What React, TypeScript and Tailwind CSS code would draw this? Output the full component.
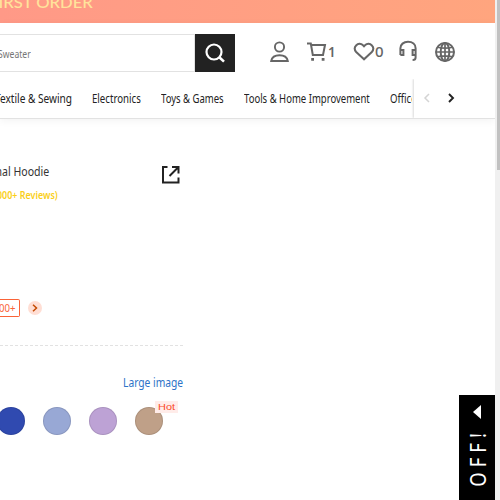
import { useLayoutEffect, useRef, useState } from 'react';

type FitProps = { text: string; width: number; className?: string };

// Condenses a single line of text to the given width.
function Fit({ text, width, className = '' }: FitProps) {
  const ref = useRef<HTMLSpanElement>(null);
  const [scale, setScale] = useState(1);
  useLayoutEffect(() => {
    if (ref.current) setScale(width / ref.current.offsetWidth);
  }, [text, width]);
  return (
    <span className="block shrink-0 whitespace-nowrap" style={{ width }}>
      <span ref={ref} className={`inline-block origin-left ${className}`} style={{ transform: `scaleX(${scale})` }}>
        {text}
      </span>
    </span>
  );
}

function Header() {
  return (
    <header className="h-24 shrink-0 border-b border-[#e2e2e2] bg-white pt-[11px] shadow-[0_2px_8px_rgba(0,0,0,0.05)]">
      <div className="flex h-[38px]">
        <div className="flex w-[195px] items-center overflow-hidden border-y border-r border-[#e2e2e2] text-[11.5px] leading-4 text-[#767676]">
          <div className="-ml-[2px] pt-px">
            <Fit text="Sweater" width={33} />
          </div>
        </div>
        <button className="flex h-[38px] w-10 items-center justify-center bg-[#222]">
          <svg width="20" height="20" viewBox="0 0 20 20" fill="none" stroke="#fff" strokeWidth="2.2">
            <circle cx="9" cy="9" r="7.5" />
            <path d="m14 14 5 4.600" strokeWidth="2.6" />
          </svg>
        </button>
        <div className="flex pl-[35px] pt-[6px] text-[#666]">
          <svg width="20" height="22" viewBox="0 0 20 22" fill="none" stroke="currentColor" strokeWidth="1.9">
            <circle cx="9.5" cy="7" r="4.600" />
            <path d="M1.200 21c.8-4 4-5.700 8.300-5.700s7.500 1.700 8.300 5.700Z" />
          </svg>
          <svg width="20" height="22" viewBox="0 0 20 22" fill="none" stroke="currentColor" strokeWidth="2" className="ml-[17px]">
            <path d="M0 3.500h3.800l2 11.500H16L18 5H4.200" />
            <path d="M4.200 18h2.800v2.800H4.200zm10.500 0h2.800v2.800h-2.800z" fill="currentColor" stroke="none" />
          </svg>
          <span className="ml-px flex h-[23px] w-[9px] items-center text-[15px] font-semibold">
            <Fit text="1" width={8} />
          </span>
          <svg width="22" height="22" viewBox="0 0 22 22" fill="none" stroke="currentColor" strokeWidth="2" className="ml-[16px] mt-px">
            <path d="M11 18.300 3.200 11C-1 6 5.500.2 9.800 4.100L11 5.300l1.200-1.200C16.500.2 23 6 18.800 11Z" />
          </svg>
          <span className="flex h-[23px] w-[10px] items-center text-[15px] font-medium">
            <Fit text="0" width={9} />
          </span>
          <svg width="20" height="22" viewBox="0 0 20 22" fill="none" stroke="currentColor" strokeWidth="2" className="ml-[14px]">
            <path d="M1.400 15V8.300C1.400 4.500 4.500 1.800 9 1.800s7.600 2.700 7.600 6.500v9.200q0 2.500-3 2.500M1.400 10h3v5h-3m15.200-5h-3v5h3" />
          </svg>
          <svg width="20" height="20" viewBox="0 0 20 20" fill="none" stroke="currentColor" strokeWidth="2" className="ml-[16px] mt-[2px]">
            <circle cx="10" cy="10" r="9" />
            <ellipse cx="10" cy="10" rx="4.300" ry="9" />
            <path d="M1 10h18M10 1v18M2.500 5.200q7.500 2 15 0M2.500 14.800q7.500-2 15 0" strokeWidth="1.700" />
          </svg>
        </div>
      </div>
      <nav className="flex h-[46px]">
        <div className="w-[414px] pr-[2px]">
          <div className="flex gap-5 overflow-hidden pt-4 text-[13px] leading-5 text-[#222]">
            <div className="-ml-[5px]"><Fit text="Textile &amp; Sewing" width={77} /></div>
            <Fit text="Electronics" width={49} />
            <Fit text="Toys &amp; Games" width={63} />
            <Fit text="Tools &amp; Home Improvement" width={126} />
            <Fit text="Office &amp; School Supplies" width={109} />
          </div>
        </div>
        <div className="mt-[7px] flex h-[39px] w-[81px] items-center gap-[16px] pl-[9px] pb-px shadow-[-1px_0_2px_rgba(0,0,0,0.15)] [clip-path:inset(0_0_0_-3px)]">
          <svg width="8" height="10" viewBox="0 0 8 10" fill="none" stroke="#d4d4d4" strokeWidth="1.500"><path d="M6 1 2 5l4 4" /></svg>
          <svg width="8" height="10" viewBox="0 0 8 10" fill="none" stroke="#222" strokeWidth="1.900"><path d="m2 1 4 4-4 4" /></svg>
        </div>
      </nav>
    </header>
  );
}

function Swatch({ color }: { color: string }) {
  return <div className={`size-7 shrink-0 rounded-full border border-black/10 ${color}`} />;
}

export default function App() {
  return (
    <div className="flex h-[500px] w-[500px] overflow-hidden bg-white font-['Noto_Sans',sans-serif]">
      <div className="relative flex w-[495px] flex-col overflow-hidden">
        <div className="h-[23px] shrink-0 overflow-hidden bg-linear-to-r from-[#ff9987] to-[#ffa57e] font-['Lato',sans-serif] text-base font-medium leading-5 text-[#ffe39b]">
          <div className="-ml-[11px] -mt-[8px]"><Fit text="FIRST ORDER" width={104} /></div>
        </div>
        <Header />
        <main className="w-[183px] pt-[42px]">
          <div className="flex h-[26px] justify-between pr-[3px]">
            <div className="-ml-[29px] text-[13px] leading-5 text-[#333]"><Fit text="Original Hoodie" width={78} /></div>
            <svg width="19" height="19" viewBox="0 0 19 19" fill="none" stroke="#222" strokeWidth="2" className="mt-[4px]">
              <path d="M6.500 2H2v15.500H17.500v-5M11 2H17.500V8.400M17 2.500 8.500 11" />
            </svg>
          </div>
          <div className="-ml-[11px] text-[11px] font-semibold leading-4 text-[#facf19]"><Fit text="(1000+ Reviews)" width={69} /></div>
          <div className="mt-[96px] flex h-[18px] items-center gap-2">
            <div className="flex h-[18px] w-5 items-center justify-end overflow-hidden rounded-r-[2px] border-y border-r border-[#fa6338] pr-[4px] text-[11px] leading-4 text-[#fa6338]"><Fit text="1000+" width={27} /></div>
            <div className="flex size-[14px] items-center justify-center rounded-full bg-[#ffded4]">
              <svg width="6" height="8" viewBox="0 0 6 8" fill="none" stroke="#c44a01" strokeWidth="1.500"><path d="m1 .8 3.500 3.200L1 7.200" /></svg>
            </div>
          </div>
          <div className="mt-[28px] border-t border-dashed border-[#e2e2e2]" />
          <div className="mt-[26px] flex justify-end text-[13px] leading-5 text-[#2d73c8]"><Fit text="Large image" width={60} /></div>
          <div className="-ml-[3px] mt-[15px] flex gap-[18px]">
            <Swatch color="bg-[#304ab0]" />
            <Swatch color="bg-[#98a8d5]" />
            <Swatch color="bg-[#bda2d5]" />
            <div className="relative">
              <Swatch color="bg-[#bfa088]" />
              <span className="absolute -top-[6px] left-5 h-3 w-[23px] bg-[#ffece9] pl-[3px] font-['Liberation_Sans',Arial,sans-serif] text-[9px] leading-[12px] text-[#fa4b28]"><Fit text="Hot" width={17} /></span>
            </div>
          </div>
        </main>
        <aside className="absolute right-0 top-[395px] flex h-[105px] w-9 flex-col items-center overflow-hidden bg-black text-white">
          <svg width="8" height="14" viewBox="0 0 8 14" fill="currentColor" className="mt-[10px] shrink-0"><path d="M8 0v14L0 7Z" /></svg>
          <div className="mt-[9px] h-0 w-9 shrink-0 origin-top scale-y-[.84]">
            <div className="rotate-180 whitespace-nowrap text-[22px] leading-9 tracking-[6px] [word-spacing:4px] [writing-mode:vertical-rl]">15% OFF!</div>
          </div>
        </aside>
      </div>
      <div className="w-[5px] bg-[#f0f0f0] pl-[2px]">
        <div className="h-[170px] bg-[#c1c1c1]" />
      </div>
    </div>
  );
}
